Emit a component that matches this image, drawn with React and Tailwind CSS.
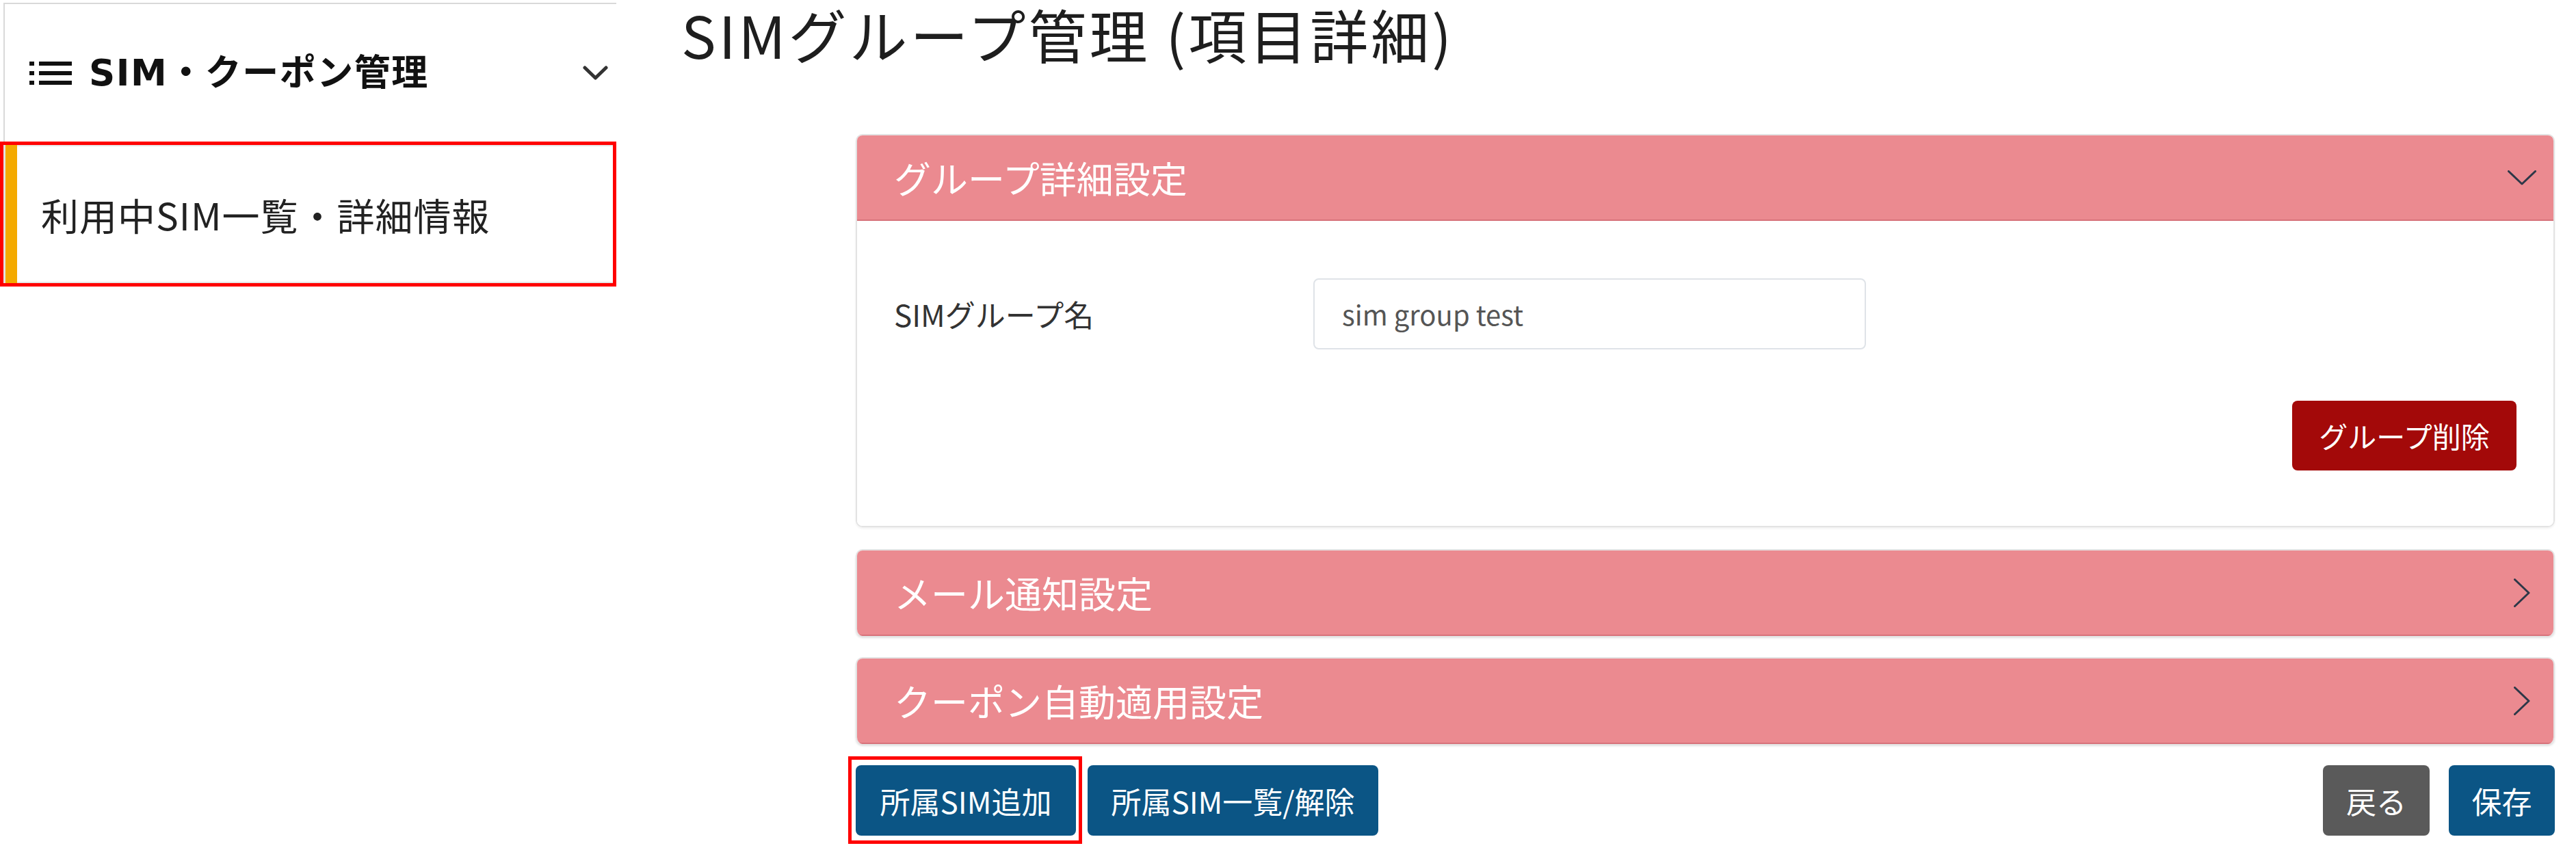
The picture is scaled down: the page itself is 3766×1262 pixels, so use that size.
import React from "react";

function ChevronDown({ className }) {
  return (
    <svg className={className} viewBox="0 0 42 22" fill="none">
      <polyline points="1.5,1.5 21,20 40.5,1.5" stroke="#2d3848" strokeWidth="3" strokeLinecap="round" strokeLinejoin="round" />
    </svg>
  );
}

function ChevronRight({ className }) {
  return (
    <svg className={className} viewBox="0 0 24 42" fill="none">
      <polyline points="1.5,1.5 22,21 1.5,40.5" stroke="#2d3848" strokeWidth="3" strokeLinecap="round" strokeLinejoin="round" />
    </svg>
  );
}

function ListIcon() {
  return (
    <svg className="w-[62px] h-[34px]" viewBox="0 0 62 34">
      <rect x="0" y="0" width="7" height="6" fill="#111" />
      <rect x="0" y="14" width="7" height="6" fill="#111" />
      <rect x="0" y="28" width="7" height="6" fill="#111" />
      <rect x="14" y="0" width="48" height="6" fill="#111" />
      <rect x="14" y="14" width="48" height="6" fill="#111" />
      <rect x="14" y="28" width="48" height="6" fill="#111" />
    </svg>
  );
}

function SectionHeader({ title, open }) {
  return (
    <div className="h-[125px] bg-[#eb8a90] border-b-2 border-[#d7727a] flex items-center justify-between pl-[54px] pr-[25px]">
      <span className="text-white text-[54px] leading-none">{title}</span>
      <div className="w-[42px] flex justify-center">
        {open ? <ChevronDown className="w-[42px] h-[22px]" /> : <ChevronRight className="w-[24px] h-[42px]" />}
      </div>
    </div>
  );
}

export default function App() {
  return (
    <div className="w-[3766px] h-[1262px] bg-white flex overflow-hidden font-['Noto_Sans_CJK_JP',sans-serif] text-[#222]">
      <aside className="w-[901px] shrink-0 pt-[4px]">
        <div className="ml-[5px] h-[203px] border-l-2 border-t-2 border-[#d9d9d9] flex items-center pl-[36px] pr-[12px]">
          <ListIcon />
          <span className="ml-[25px] text-[53px] font-bold leading-[1.2] tracking-[1.5px] text-[#111] font-['DejaVu_Sans','Noto_Sans_CJK_JP',sans-serif]">
            SIM・クーポン管理
          </span>
          <div className="flex-1" />
          <svg className="w-[37px] h-[22px]" viewBox="0 0 37 22" fill="none">
            <polyline points="3,3 18.5,18 34,3" stroke="#333" strokeWidth="5" strokeLinecap="round" strokeLinejoin="round" />
          </svg>
        </div>
        <div className="h-[212px] border-[5px] border-[#ff0000] flex">
          <div className="w-[3px] bg-[#e2e2e2]" />
          <div className="w-[17px] bg-[#f4aa00]" />
          <div className="flex-1 flex items-center pl-[35px] border-t-2 border-b-2 border-[#e6e6e6]">
            <span className="text-[55px] leading-[1.2] tracking-[1px] text-[#222]">利用中SIM一覧・詳細情報</span>
          </div>
        </div>
      </aside>

      <main className="flex-1 pl-[95px] pr-[31px] pt-[4px]">
        <h1 className="text-[85px] leading-[1.05] tracking-[4px] font-normal text-[#1e1e1e]">SIMグループ管理 (項目詳細)</h1>

        <div className="ml-[255px] mt-[103px] flex flex-col">
          <div className="border-2 border-[#e3e3e3] rounded-[10px] overflow-hidden shadow-[0_2px_3px_rgba(0,0,0,0.06)]">
            <SectionHeader title="グループ詳細設定" open />
            <div className="pt-[84px] pb-[81px] pl-[54px] pr-[54px] bg-white">
              <div className="flex items-center h-[104px]">
                <div className="w-[613px] text-[44px] text-[#333] leading-[1.2]">SIMグループ名</div>
                <div className="w-[808px] h-[104px] border-2 border-[#dfe3e8] rounded-[8px] flex items-center pl-[40px] text-[40px] text-[#555]">
                  sim group test
                </div>
              </div>
              <div className="flex justify-end mt-[75px]">
                <button className="w-[328px] h-[102px] bg-[#a30909] rounded-[8px] text-white text-[42px] leading-none">
                  グループ削除
                </button>
              </div>
            </div>
          </div>

          <div className="mt-[32px] border-2 border-b-0 border-[#e3e3e3] rounded-[10px] overflow-hidden shadow-[0_3px_3px_rgba(0,0,0,0.12)]">
            <SectionHeader title="メール通知設定" />
          </div>

          <div className="mt-[31px] border-2 border-b-0 border-[#e3e3e3] rounded-[10px] overflow-hidden shadow-[0_3px_3px_rgba(0,0,0,0.12)]">
            <SectionHeader title="クーポン自動適用設定" />
          </div>

          <div className="mt-[31px] flex items-center h-[103px]">
            <div className="relative">
              <button className="w-[322px] h-[103px] bg-[#0b5585] rounded-[8px] text-white text-[44px] leading-none">
                所属SIM追加
              </button>
              <div className="absolute top-[-13px] bottom-[-12px] left-[-11px] right-[-9px] border-[5px] border-[#ff0000] pointer-events-none" />
            </div>
            <button className="ml-[17px] w-[425px] h-[103px] bg-[#0b5585] rounded-[8px] text-white text-[44px] leading-none">
              所属SIM一覧/解除
            </button>
            <div className="flex-1" />
            <button className="w-[156px] h-[103px] bg-[#5a5a5a] rounded-[8px] text-white text-[44px] leading-none">
              戻る
            </button>
            <button className="ml-[28px] w-[155px] h-[103px] bg-[#0b5585] rounded-[8px] text-white text-[44px] leading-none">
              保存
            </button>
          </div>
        </div>
      </main>
    </div>
  );
}
